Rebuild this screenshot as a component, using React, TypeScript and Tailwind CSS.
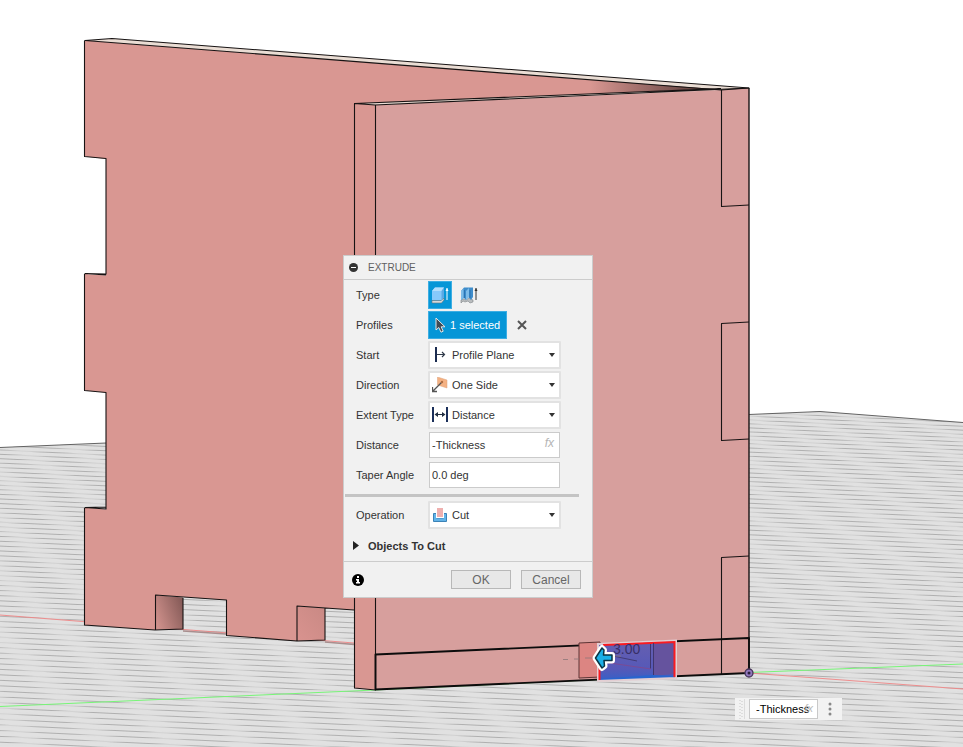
import React, { useState } from 'react';

type Line = { x1: number; y1: number; x2: number; y2: number };

// Two families of floor grid lines, spreading apart towards the viewer.
function floorLines(leftY: number, rise: number, step: number): Line[] {
  const lines: Line[] = [];
  let y = leftY;
  let gap = step;
  while (y < 860) {
    lines.push({ x1: 0, y1: y, x2: 963, y2: y + rise });
    y += gap;
    gap += 0.025;
  }
  return lines;
}

const falling = floorLines(350, 46, 3.7);
const rising = floorLines(400, -34, 4.6);

function Scene() {
  return (
    <svg className="absolute inset-0 h-full w-full" viewBox="0 0 963 747" preserveAspectRatio="xMinYMin slice" aria-hidden="true">
      <defs>
        <clipPath id="floor"><path d="M0 447.500 L106 443 V440 H740 V415 L820 411.500 L963 422.500 V747 H0Z" /></clipPath>
        <linearGradient id="notch" x1="0" y1="0.7" x2="1" y2="0.25">
          <stop offset="0" stopColor="#d0918c" /><stop offset="1" stopColor="#865b58" />
        </linearGradient>
        <linearGradient id="notch2" x1="0" y1="1" x2="1" y2="0">
          <stop offset="0" stopColor="#d9938f" /><stop offset="1" stopColor="#c98984" />
        </linearGradient>
        <linearGradient id="cornerShade" x1="590" y1="0" x2="715" y2="0" gradientUnits="userSpaceOnUse">
          <stop offset="0" stopColor="#d99792" /><stop offset="1" stopColor="#4d3330" />
        </linearGradient>
        <linearGradient id="pick" x1="0" y1="0" x2="0" y2="1">
          <stop offset="0" stopColor="#665fb0" /><stop offset="0.7" stopColor="#5659b8" /><stop offset="1" stopColor="#3560c8" />
        </linearGradient>
      </defs>
      <rect width="963" height="747" fill="#fff" />
      <g clipPath="url(#floor)">
        <rect width="963" height="747" fill="#e1e1e1" />
        <g stroke="#a9a9a9" strokeWidth="0.9">
          {falling.map((l, i) => <line key={i} {...l} />)}
        </g>
        <g stroke="#dfdfdf" strokeWidth="2.2" strokeOpacity="0.75">
          {rising.map((l, i) => <line key={i} {...l} />)}
        </g>
      </g>
      <path d="M0 447.500 L106 443 M749 414.500 L820 411.500 L963 422.500" fill="none" stroke="#555" strokeWidth="0.9" />
      <path d="M0 615 L354 643 M749 673 L963 689" stroke="#ef8585" strokeWidth="0.9" />
      <path d="M183 631 L226 634 M325 642 L354 644.500" stroke="#a88e8e" strokeWidth="1.500" />
      <path d="M0 706.500 L375 690 L749 672.500 L963 664" fill="none" stroke="#78f578" strokeWidth="1" />

      <path d="M85 40.500 L112 38.500 L749 88 L721 90Z" fill="#eaddd4" />
      <path d="M85 40.500 L721 90 L375 104 L354 103 V610 L297 606 V641 L226 635.500 V600 L155 595 V630 L85 625 V507.500 L106 509.500 V392.500 L85 390.500 V274 L106 275.500 V159 L85 156.500Z" fill="#d99792" />
      <path d="M590 80 L715 89 L590 94.500Z" fill="url(#cornerShade)" />
      <path d="M155 595 L183 597.500 V629 L155 630Z" fill="url(#notch)" />
      <path d="M297 606 L325 608 V640 L297 641Z" fill="url(#notch2)" />
      <path d="M354 103 L375 104 V690 L354 688Z" fill="#d99792" />
      <path d="M354 103.500 L721 88.500 L721 90 L375 105Z" fill="#eaddd4" />
      <path d="M375 105 L721 90 L749 88 V673 L375 690Z" fill="#d79f9d" />

      <g fill="none" stroke="#171313" strokeWidth="1.100" strokeLinejoin="round">
        <path d="M85 40.500 L112 38.500 L749 88 L721 90Z" />
        <path d="M84.500 40.500 V156.500 L106 158.500 V274 L85 273.500 L106 275 M84.500 274 V390.500 L106 392.500 V509 L85 507.500 L106 507 M84.500 508 V625 L155 630 L183 629 V598 M155.500 630 V595 L226.500 600 V635.500 L297 641 L325 640 V608 M297 641 V606 L354 610" />
        <path d="M721 88.500 L354.500 103.500 V688 L375.500 690 V105 L354 103.500 M375 105 L749 88" />
        <path d="M749 88 V640" strokeWidth="1.400" />
        <path d="M721.500 90 V206.500 L749 205 M749 322 L721.500 323.500 V440.500 L749 439 M749 556 L721.500 557.500 V674" />
        <path d="M375.500 654.500 L749 638 V673 L375.500 689.500Z" stroke="#0c0c0c" strokeWidth="1.900" />
      </g>

      <path d="M579 643 L600 642 V677 L579 678Z" fill="#dc8582" stroke="#5d3434" />
      <path d="M598 644 L676 641 V678 L598 681Z" fill="url(#pick)" />
      <path d="M653 642 L674 641 V674 L653 676Z" fill="#65539e" />
      <path d="M599 679 L653 675 L674 676 V678 L599 680Z" fill="#2865cf" />
      <g fill="none">
        <path d="M598 644 L676 640.500 V678 L598 681Z" stroke="#e3cfd3" strokeWidth="2" />
        <path d="M603 645 L674.500 642 V677 M599.500 661 V680" stroke="#fa1b21" strokeWidth="2" />
        <path d="M650.500 644 V669 M653.500 643 V675" stroke="#3f366e" />
        <path d="M613 656 L637 661" stroke="#423b77" />
        <path d="M603 662 L651 669" stroke="#7a4b95" />
        <path d="M563 659.500 H568 M574 659 H579 M585 658 H595 M612 656 H621" stroke="#8d7779" strokeWidth="0.8" />
      </g>
      <text x="613" y="654" fill="#382f68" className="font-['Liberation_Sans',sans-serif] text-[14px]">3.00</text>
      <path d="M595.500 658 L602 648 L604 650 L603.500 655 H612 V660.500 H604 L604.500 666 L602 668Z" fill="#fff" stroke="#fff" strokeWidth="6" strokeLinejoin="round" />
      <path d="M595.500 658 L602 648 L604 650 L603.500 655 H612 V660.500 H604 L604.500 666 L602 668Z" fill="#1bafe7" stroke="#0a3343" strokeWidth="1.500" strokeLinejoin="round" />
      <circle cx="749" cy="673" r="4" fill="#9178bd" stroke="#453457" strokeWidth="1.300" />
      <circle cx="749" cy="673" r="1.500" fill="#2b1e3b" />
    </svg>
  );
}

function ExtrudeIcon() {
  return (
    <svg width="18" height="18" viewBox="0 0 18 18" aria-hidden="true">
      <path d="M1 14.500 H10 L13 12 V14 L10.500 17 H1Z" fill="#d5d9db" stroke="#66757e" strokeWidth="0.6" />
      <path d="M1 5 L4 1.500 H13 V11 L10.500 14 H1Z" fill="#86c9fb" />
      <path d="M1 5 L4 1.500 H13 L10.500 5Z" fill="#b4defc" />
      <path d="M10.500 5 L13 1.500 V11 L10.500 14Z" fill="#5aa9e4" />
      <path d="M16 14 V2" stroke="#fff" />
      <path d="M14.500 5 L16 2 L17.500 5Z" fill="#fff" />
    </svg>
  );
}

function ThinExtrudeIcon() {
  return (
    <svg width="18" height="18" viewBox="0 0 18 18" aria-hidden="true">
      <path d="M1 14 L4 13 L6 14 L9 12 L13 14 V16 L10 17 L8 15 L5 16 L3 15 L1 17Z" fill="#b9bcbe" stroke="#7f8488" strokeWidth="0.6" />
      <path d="M1 5 L4 1.500 H13 V11 L11 14 L8.500 11 L6 14 L4 12 L1 14Z" fill="#3f8dcb" />
      <path d="M1 5 L3.500 2.500 V12 L1 14Z M6 5 L9 2 V11 L6 14Z" fill="#7dbbe8" />
      <path d="M4.500 4 V12 M10 4 V12" stroke="#2a73b2" />
      <path d="M16 14 V2" stroke="#333" />
      <path d="M14.500 5 L16 2 L17.500 5Z" fill="#333" />
    </svg>
  );
}

function StartIcon() {
  return (
    <svg width="16" height="16" viewBox="0 0 16 16" fill="none" aria-hidden="true">
      <path d="M4 0 V15" stroke="#1b2c50" strokeWidth="2" />
      <path d="M5 7.500 H12 M10 5 L12.500 7.500 L10 10" stroke="#303a4a" strokeWidth="1.200" />
    </svg>
  );
}

function DirectionIcon() {
  return (
    <svg width="16" height="16" viewBox="0 0 16 16" fill="none" aria-hidden="true">
      <path d="M5.500 0 L15 3 V11 L5.500 8Z" fill="#f4b183" stroke="#dfa27a" strokeWidth="0.5" />
      <path d="M10 5 L1 14 M0.500 10 V14.500 H5" stroke="#555" strokeWidth="1.300" />
      <circle cx="10" cy="5" r="1.200" fill="#b06d42" />
    </svg>
  );
}

function ExtentIcon() {
  return (
    <svg width="16" height="16" viewBox="0 0 16 16" fill="none" aria-hidden="true">
      <path d="M1 0 V15 M15 0 V15" stroke="#1b2f5a" strokeWidth="2" />
      <path d="M4 7.500 H12" stroke="#222f42" />
      <path d="M2.500 7.500 L6 5 V10Z M13.500 7.500 L10 5 V10Z" fill="#222f42" />
    </svg>
  );
}

function CutIcon() {
  return (
    <svg width="16" height="16" viewBox="0 0 16 16" aria-hidden="true">
      <path d="M1.500 6.500 H4.500 V11 H11.500 V6.500 H14.500 V14.500 H1.500Z" fill="#62b3e8" stroke="#3c83b7" />
      <path d="M4 5 H12 V11 H4Z" fill="#fff" />
      <path d="M5 1 H11 V10 H5Z" fill="#efb0af" />
    </svg>
  );
}

function Row({ id, label, children }: { id: string; label: string; children: React.ReactNode }) {
  return (
    <div className="flex h-[30px] items-center pl-3">
      <label htmlFor={id} className="w-[72px] shrink-0">{label}</label>
      {children}
    </div>
  );
}

function Dropdown({ id, options, icon }: { id: string; options: string[]; icon: React.ReactNode }) {
  return (
    <div className="relative h-[28px] w-[133px]">
      <select id={id} className="h-full w-full appearance-none rounded-[1px] border-2 border-[#e2e2e2] bg-white pl-[22px] pr-4 outline-none">
        {options.map((o) => <option key={o}>{o}</option>)}
      </select>
      <span className="pointer-events-none absolute inset-y-0 left-1 flex items-center">{icon}</span>
      <svg className="pointer-events-none absolute right-[6px] top-3 h-1 w-[6px]" viewBox="0 0 6 4" aria-hidden="true"><path d="M0 0 H6 L3 4Z" fill="#333" /></svg>
    </div>
  );
}

const field = 'h-[26px] w-[131px] border border-[#cbcbcb] bg-white px-[2px] outline-none';

function ExtrudeDialog({ distance, onDistance }: { distance: string; onDistance: (v: string) => void }) {
  return (
    <section aria-label="Extrude" className="absolute left-[343px] top-[255px] w-[250px] border border-[#cccccc] bg-[#f1f1f1] text-[11px] leading-4 text-[#333]">
      <header className="flex h-6 items-center gap-[10px] border-b border-[#cccccc] pl-[5px]">
        <button type="button" aria-label="Collapse" className="flex h-[9px] w-[9px] items-center justify-center rounded-full bg-[#333]">
          <span className="h-px w-[5px] bg-white" />
        </button>
        <h1 className="text-[10px] text-[#606060]">EXTRUDE</h1>
      </header>

      <div className="flex h-[30px] items-center pl-3">
        <span className="w-[72px]">Type</span>
        <button type="button" aria-label="Extrude" className="flex h-[28px] w-[24px] items-center justify-center border border-[#3daee3] bg-[#0696d7]"><ExtrudeIcon /></button>
        <button type="button" aria-label="Thin extrude" className="ml-[8px] flex h-[28px] w-[18px] items-center justify-center"><ThinExtrudeIcon /></button>
      </div>
      <div className="flex h-[30px] items-center pl-3">
        <span className="w-[72px]">Profiles</span>
        <button type="button" className="flex h-[28px] w-[79px] items-center gap-[4px] border border-[#3daee3] bg-[#0696d7] pl-[6px] text-white">
          <svg width="11" height="16" viewBox="0 0 11 16" aria-hidden="true"><path d="M1 1 V13 L3.800 10.500 L6 15.200 L8.200 14.200 L6.200 9.800 H10Z" fill="#404b55" stroke="#e5e5e5" strokeWidth="1" /></svg>
          1 selected
        </button>
        <button type="button" aria-label="Clear selection" className="ml-[10px]">
          <svg width="10" height="10" viewBox="0 0 10 10" aria-hidden="true"><path d="M1 1 L9 9 M9 1 L1 9" stroke="#555" strokeWidth="2" /></svg>
        </button>
      </div>
      <Row id="start" label="Start"><Dropdown id="start" options={['Profile Plane', 'Offset Plane', 'Object']} icon={<StartIcon />} /></Row>
      <Row id="direction" label="Direction"><Dropdown id="direction" options={['One Side', 'Two Sides', 'Symmetric']} icon={<DirectionIcon />} /></Row>
      <Row id="extent" label="Extent Type"><Dropdown id="extent" options={['Distance', 'To Object', 'All']} icon={<ExtentIcon />} /></Row>
      <Row id="distance" label="Distance">
        <div className="relative flex pl-px">
          <input id="distance" className={field} value={distance} onChange={(e) => onDistance(e.target.value)} />
          <span className="absolute right-[6px] top-[3px] font-['Liberation_Sans',sans-serif] text-[12px] italic text-[#b5b5b5]">fx</span>
        </div>
      </Row>
      <Row id="taper" label="Taper Angle">
        <div className="flex pl-px"><input id="taper" className={field} defaultValue="0.0 deg" /></div>
      </Row>

      <hr className="ml-px mr-[13px] mt-1 mb-[3px] border-0 border-t-3 border-[#c4c4c4]" />

      <Row id="operation" label="Operation"><Dropdown id="operation" options={['Cut', 'Join', 'Intersect', 'New Body']} icon={<CutIcon />} /></Row>
      <button type="button" className="flex h-[31px] w-full items-center gap-[9px] pl-[9px] font-bold">
        <svg width="6" height="9" viewBox="0 0 6 9" aria-hidden="true"><path d="M0 0 L6 4.500 L0 9Z" fill="#222" /></svg>
        Objects To Cut
      </button>

      <footer className="flex h-9 items-center border-t border-[#cccccc] pl-2 pr-[11px] text-[12px] text-[#666]">
        <button type="button" aria-label="Information">
          <svg width="12" height="12" viewBox="0 0 12 12" aria-hidden="true">
            <circle cx="6" cy="6" r="6" fill="#000" />
            <path d="M5 2 H7 V4 H5Z M4 5 H7 V8 H8 V9.500 H4 V8 H5 V6.500 H4Z" fill="#fff" />
          </svg>
        </button>
        <button type="button" className="ml-auto h-[19px] w-[60px] border border-[#b8b8b8] bg-[#e8e8e8]">OK</button>
        <button type="button" className="ml-[10px] h-[19px] w-[60px] border border-[#b8b8b8] bg-[#e8e8e8]">Cancel</button>
      </footer>
    </section>
  );
}

function FloatingInput({ distance, onDistance }: { distance: string; onDistance: (v: string) => void }) {
  return (
    <div className="absolute left-[735px] top-[698px] flex h-[22px] w-[107px] items-center bg-[#f2f2f2] text-[11px] text-black">
      <svg className="ml-[4px] mr-[4px]" width="6" height="20" viewBox="0 0 6 20" aria-hidden="true">
        <path d="M1 1 V20 M3 2 V20" stroke="#c8c8c8" strokeDasharray="1 2" />
        <path d="M5.500 0 V20" stroke="#dcdcdc" />
      </svg>
      <div className="relative flex">
        <input aria-label="Distance value" className="h-5 w-[69px] border border-[#c9c9c9] bg-white px-[6px] outline-none" value={distance} onChange={(e) => onDistance(e.target.value)} />
        <span aria-hidden="true" className="absolute right-[5px] top-px text-[11px] italic text-[#b9b9b9]">fx</span>
      </div>
      <button type="button" aria-label="More options" className="ml-[10px]">
        <svg width="4" height="14" viewBox="0 0 4 14" fill="#888" aria-hidden="true">
          <circle cx="2" cy="2" r="1.500" /><circle cx="2" cy="7" r="1.500" /><circle cx="2" cy="12" r="1.500" />
        </svg>
      </button>
    </div>
  );
}

export default function App() {
  const [distance, setDistance] = useState('-Thickness');
  return (
    <main className="relative h-screen w-full overflow-hidden bg-white font-['Liberation_Sans',Arial,sans-serif]">
      <Scene />
      <ExtrudeDialog distance={distance} onDistance={setDistance} />
      <FloatingInput distance={distance} onDistance={setDistance} />
    </main>
  );
}
